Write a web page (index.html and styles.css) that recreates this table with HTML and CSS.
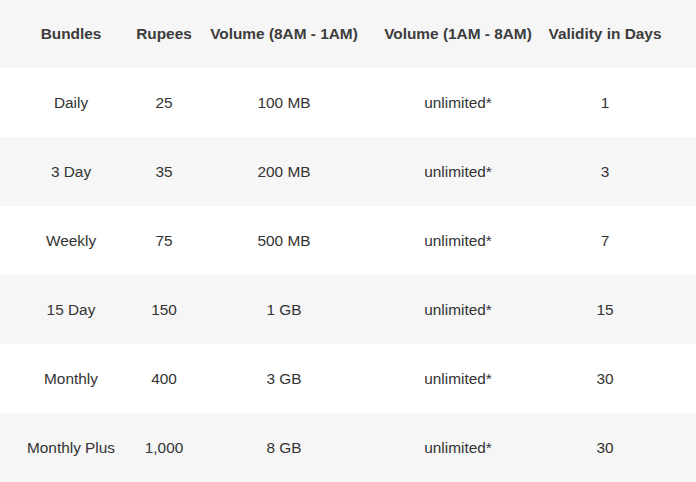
FILE: index.html
```html
<!DOCTYPE html>
<html lang="en">
<head>
<meta charset="utf-8">
<title>Bundles</title>
<link rel="stylesheet" href="styles.css">
</head>
<body>
<div class="table" role="table">
  <div class="row head" role="row">
    <div class="cell" role="columnheader">Bundles</div>
    <div class="cell" role="columnheader">Rupees</div>
    <div class="cell" role="columnheader">Volume (8AM - 1AM)</div>
    <div class="cell" role="columnheader">Volume (1AM - 8AM)</div>
    <div class="cell" role="columnheader">Validity in Days</div>
  </div>
  <div class="row" role="row">
    <div class="cell">Daily</div>
    <div class="cell">25</div>
    <div class="cell">100 MB</div>
    <div class="cell">unlimited*</div>
    <div class="cell">1</div>
  </div>
  <div class="row alt" role="row">
    <div class="cell">3 Day</div>
    <div class="cell">35</div>
    <div class="cell">200 MB</div>
    <div class="cell">unlimited*</div>
    <div class="cell">3</div>
  </div>
  <div class="row" role="row">
    <div class="cell">Weekly</div>
    <div class="cell">75</div>
    <div class="cell">500 MB</div>
    <div class="cell">unlimited*</div>
    <div class="cell">7</div>
  </div>
  <div class="row alt" role="row">
    <div class="cell">15 Day</div>
    <div class="cell">150</div>
    <div class="cell">1 GB</div>
    <div class="cell">unlimited*</div>
    <div class="cell">15</div>
  </div>
  <div class="row" role="row">
    <div class="cell">Monthly</div>
    <div class="cell">400</div>
    <div class="cell">3 GB</div>
    <div class="cell">unlimited*</div>
    <div class="cell">30</div>
  </div>
  <div class="row alt" role="row">
    <div class="cell">Monthly Plus</div>
    <div class="cell">1,000</div>
    <div class="cell">8 GB</div>
    <div class="cell">unlimited*</div>
    <div class="cell">30</div>
  </div>
</div>
</body>
</html>
```
FILE: styles.css
```css
html, body {
  margin: 0;
  padding: 0;
  background: #ffffff;
}

body {
  font-family: "Liberation Sans", Arial, sans-serif;
  font-size: 15.4px;
  color: #333333;
}

.table {
  display: flex;
  flex-direction: column;
  width: 696px;
}

.row {
  display: grid;
  grid-template-columns: 114px 72px 168px 180px 114px;
  align-items: center;
  height: 69px;
  padding-left: 14px;
  background: #ffffff;
}

.row.alt,
.row.head {
  background: #f6f6f6;
}

.row.head {
  height: 68px;
  font-weight: bold;
  color: #3c3c3c;
}

.cell {
  text-align: center;
  white-space: nowrap;
}
```
